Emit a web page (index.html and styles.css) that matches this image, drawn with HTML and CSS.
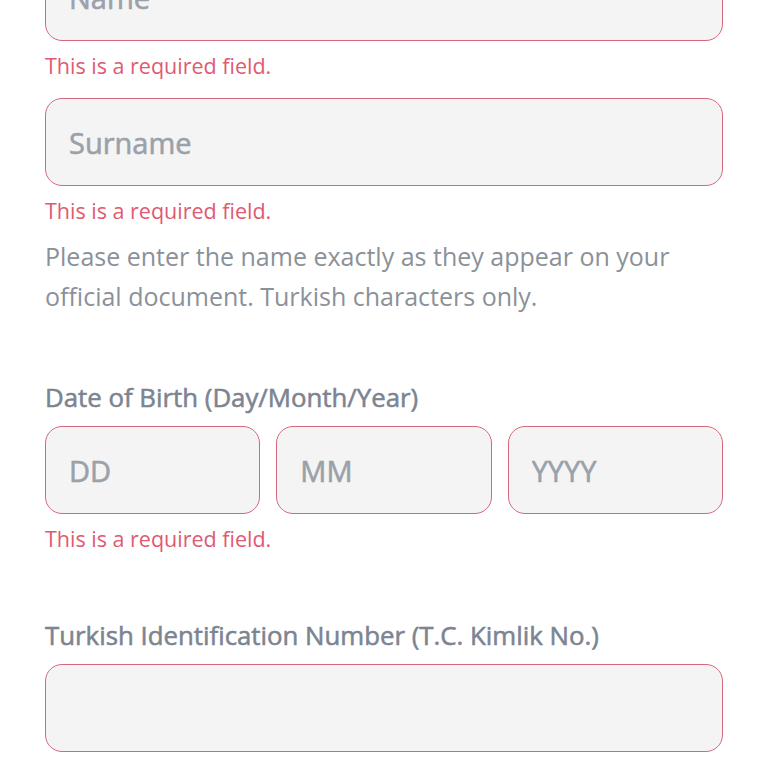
FILE: index.html
```html
<!DOCTYPE html>
<html lang="en">
<head>
<meta charset="utf-8">
<title>Form</title>
<link rel="stylesheet" href="styles.css">
</head>
<body>
<form class="form">
  <div class="field">
    <input class="input" type="text" placeholder="Name">
    <p class="error">This is a required field.</p>
  </div>
  <div class="field">
    <input class="input" type="text" placeholder="Surname">
    <p class="error">This is a required field.</p>
  </div>
  <p class="help">Please enter the name exactly as they appear on your official document. Turkish characters only.</p>

  <div class="section">
    <label class="label">Date of Birth (Day/Month/Year)</label>
    <div class="date-row">
      <input class="input" type="text" placeholder="DD">
      <input class="input" type="text" placeholder="MM">
      <input class="input" type="text" placeholder="YYYY">
    </div>
    <p class="error">This is a required field.</p>
  </div>

  <div class="section">
    <label class="label">Turkish Identification Number (T.C. Kimlik No.)</label>
    <input class="input" type="text">
  </div>
</form>
</body>
</html>
```

FILE: styles.css
```css
html, body {
  margin: 0;
  padding: 0;
  background: #ffffff;
}
body {
  font-family: "Open Sans", "Noto Sans", sans-serif;
  overflow: hidden;
}
.form {
  margin-top: -47px;
  padding: 0 45px;
  display: flex;
  flex-direction: column;
}
.field {
  display: flex;
  flex-direction: column;
  margin-bottom: 17px;
}
.field + .help {
  margin-top: -7px;
}
.input {
  box-sizing: border-box;
  width: 100%;
  height: 88px;
  margin: 0;
  padding: 0 23px;
  border: 1.8px solid #d4687c;
  border-radius: 17px;
  background: #f4f4f5;
  font-family: inherit;
  font-size: 29px;
  font-weight: 400;
  color: #333;
  outline: none;
}
.input::placeholder {
  color: #9ba1a9;
  -webkit-text-stroke: 0.6px #9ba1a9;
}
.error {
  margin: 10px 0 0;
  font-size: 21.5px;
  line-height: 30px;
  color: #e05a72;
}
.help {
  margin: 0;
  font-size: 25px;
  line-height: 40px;
  color: #8b9199;
}
.section {
  display: flex;
  flex-direction: column;
  margin-top: 65px;
}
.label {
  font-size: 25.8px;
  line-height: 32px;
  font-weight: 400;
  color: #7c8491;
  -webkit-text-stroke: 0.55px #7c8491;
  margin-bottom: 13px;
}
.date-row {
  display: grid;
  grid-template-columns: 1fr 1fr 1fr;
  gap: 16px;
}
```
